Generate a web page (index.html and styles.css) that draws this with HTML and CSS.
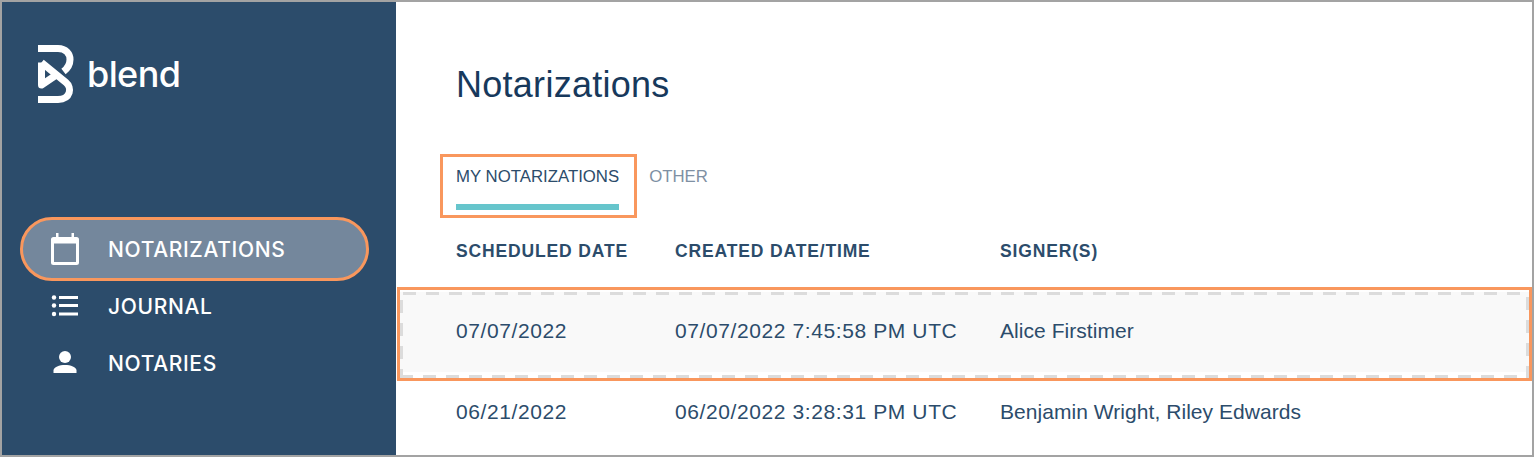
FILE: index.html
```html
<!DOCTYPE html>
<html lang="en">
<head>
<meta charset="utf-8">
<title>Notarizations</title>
<link rel="stylesheet" href="styles.css">
</head>
<body>
<div class="frame">
  <aside class="sidebar">
    <div class="brand">
      <svg class="brand-mark" viewBox="0 0 38 60" width="38" height="60" aria-hidden="true">
        <path d="M0 4.500H20C28 4.500 32 10 32 15.500C32 20 30 24 25.500 27.500" fill="none" stroke="#fff" stroke-width="7"/>
        <path d="M3.500 18.500L28 38.500C34 43.500 33 55 20 55.500H0" fill="none" stroke="#fff" stroke-width="7"/>
        <path d="M3.500 18.500V41L17.500 31.500" fill="none" stroke="#fff" stroke-width="7" stroke-linejoin="round"/>
      </svg>
      <span class="brand-name">blend</span>
    </div>
    <nav class="nav">
      <a class="nav-item active">
        <svg class="nav-icon" viewBox="0 0 28 32" width="28" height="32" aria-hidden="true">
          <path fill="#fff" fill-rule="evenodd" d="M5 0h2.500v4h13V0H23v4h2.500A2.500 2.500 0 0 1 28 6.500v23a2.500 2.500 0 0 1-2.500 2.500h-23A2.500 2.500 0 0 1 0 29.500v-23A2.500 2.500 0 0 1 2.500 4H5zM3 10.500V29h22V10.500z"/>
        </svg>
        <span>NOTARIZATIONS</span>
      </a>
      <a class="nav-item">
        <svg class="nav-icon" viewBox="0 0 28 32" width="28" height="32" aria-hidden="true">
          <g fill="#fff">
            <circle cx="3" cy="7.500" r="2.200"/><circle cx="3" cy="15.500" r="2.200"/><circle cx="3" cy="24" r="2.200"/>
            <rect x="8" y="6" width="19" height="3"/><rect x="8" y="14" width="19" height="3"/><rect x="8" y="22.500" width="19" height="3"/>
          </g>
        </svg>
        <span>JOURNAL</span>
      </a>
      <a class="nav-item">
        <svg class="nav-icon" viewBox="0 0 28 32" width="28" height="32" aria-hidden="true">
          <g fill="#fff">
            <circle cx="14" cy="10" r="6"/>
            <path d="M2.500 26v-2.500C2.500 20 8.500 18 14 18s11.500 2 11.500 5.500V26z"/>
          </g>
        </svg>
        <span>NOTARIES</span>
      </a>
    </nav>
  </aside>
  <main class="main">
    <h1 class="title">Notarizations</h1>
    <div class="tabs">
      <div class="tab tab-active"><span class="tab-label">MY NOTARIZATIONS</span><span class="tab-bar"></span></div>
      <div class="tab tab-other"><span class="tab-label">OTHER</span></div>
    </div>
    <div class="row row-head">
      <div>SCHEDULED DATE</div>
      <div>CREATED DATE/TIME</div>
      <div>SIGNER(S)</div>
    </div>
    <div class="row row-selected">
      <div class="date">07/07/2022</div>
      <div class="date">07/07/2022 7:45:58 PM UTC</div>
      <div>Alice Firstimer</div>
    </div>
    <div class="row row-plain">
      <div class="date">06/21/2022</div>
      <div class="date">06/20/2022 3:28:31 PM UTC</div>
      <div>Benjamin Wright, Riley Edwards</div>
    </div>
  </main>
</div>
</body>
</html>
```
FILE: styles.css
```css
* { box-sizing: border-box; }
html, body { margin: 0; padding: 0; }
body { font-family: "Liberation Sans", Arial, sans-serif; background: #fff; }

.frame {
  width: 1534px;
  height: 457px;
  border: 2px solid #a3a3a3;
  display: flex;
  overflow: hidden;
}

.sidebar {
  width: 394px;
  flex: none;
  background: #2c4c6b;
  padding-top: 42px;
  color: #fff;
}

.brand {
  display: flex;
  align-items: center;
  gap: 11px;
  height: 60px;
  margin-left: 36px;
}
.brand-mark { flex: none; }
.brand-name {
  font-family: Inter, sans-serif;
  font-size: 36px;
  font-weight: 500;
  letter-spacing: -0.6px;
  line-height: 44px;
  color: #fff;
  margin-top: 0;
}

.nav { margin-top: 113px; }
.nav-item {
  display: flex;
  align-items: center;
  width: 349px;
  height: 50px;
  margin: 0 0 7px 18px;
  padding-left: 28px;
  border: 3px solid transparent;
  font-family: Inter, sans-serif;
  font-size: 21px;
  font-weight: 500;
  letter-spacing: 0.65px;
  color: #fff;
}
.nav-item span { margin-left: 29px; }
.nav-item.active {
  height: 64px;
  margin-top: 0;
  margin-bottom: 0;
  background: #74879c;
  border-color: #f9975d;
  border-radius: 32px;
}
.nav-icon { flex: none; }

.main {
  flex: 1;
  min-width: 0;
  color: #2c4c6b;
}
.title {
  margin: 61px 0 0 60px;
  font-size: 36px;
  line-height: 44px;
  font-weight: 400;
  letter-spacing: 0.27px;
  color: #17395c;
}

.tabs {
  display: flex;
  margin: 47px 0 0 44px;
  height: 64px;
}
.tab {
  border: 3px solid transparent;
  font-size: 16.8px;
  color: #7e90a3;
}
.tab-other { padding: 0 13px 0 9px; }
.tab-active {
  padding: 0 15px 0 13px;
  border-color: #f9975d;
  color: #2c4c6b;
  display: flex;
  flex-direction: column;
}
.tab-label { display: block; line-height: 18px; margin-top: 11px; white-space: nowrap; }
.tab-bar {
  display: block;
  height: 6px;
  margin-top: 18px;
  background: #66c5cc;
}

.row {
  display: grid;
  grid-template-columns: 219px 325px 1fr;
  align-items: center;
  padding-left: 60px;
}
.row-head {
  height: 69px;
  padding-bottom: 2px;
  font-size: 17.5px;
  font-weight: 700;
  letter-spacing: 0.85px;
}
.row-selected, .row-plain { font-size: 21px; letter-spacing: 0.05px; }
.date { letter-spacing: 0.6px; }
.row-selected {
  height: 94px;
  margin-left: 1px;
  padding-left: 56px;
  padding-bottom: 6px;
  border: 3px solid #f9975d;
  background-color: #f9f9f9;
  background-image:
    repeating-linear-gradient(90deg, #dcdcdc 0 13px, transparent 13px 23px),
    repeating-linear-gradient(90deg, #dcdcdc 0 13px, transparent 13px 23px),
    repeating-linear-gradient(180deg, #dcdcdc 0 13px, transparent 13px 23px),
    repeating-linear-gradient(180deg, #dcdcdc 0 13px, transparent 13px 23px),
    linear-gradient(#fff, #fff),
    linear-gradient(#fff, #fff);
  background-size: 100% 3px, 100% 3px, 3px 100%, 3px 100%, 100% 2px, 100% 6px;
  background-position: 3px 2px, 0 85px, 0 10px, 100% 7px, 0 0, 0 82px;
  background-repeat: no-repeat;
}
.row-plain { height: 62px; }
```
